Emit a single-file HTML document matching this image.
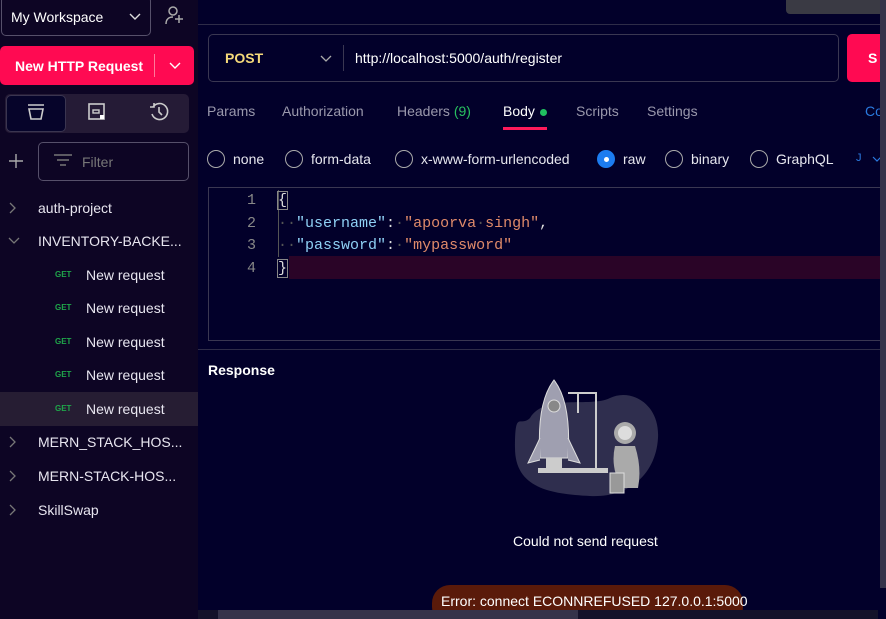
<!DOCTYPE html>
<html><head><meta charset="utf-8"><style>
*{margin:0;padding:0;box-sizing:border-box}
html,body{width:886px;height:619px;overflow:hidden}
body{background:#02002a;font-family:"Liberation Sans",sans-serif;color:#e6e6ee;position:relative;font-size:14px}
.a{position:absolute}
#sb{left:0;top:0;width:198px;height:619px;background:#0d0524}
.tree{left:0;width:198px;height:34px;font-size:14px;line-height:34px;color:#e8e6f0}
.tree svg{position:absolute;left:9px;top:11px}
.tree .t{position:absolute;left:38px}
.req .g{position:absolute;left:55px;color:#1fa64a;font-size:8px;font-weight:bold}
.req .t{left:86px}
.mono{font-family:"Liberation Mono","DejaVu Sans Mono",monospace;font-size:15px}
.tab{top:103px;font-size:14px;color:#9a98ac}
.rad{top:150px;font-size:14px;color:#e6e6ee;height:18px;line-height:18px}
.rad i{position:absolute;left:0;top:0;width:18px;height:18px;border:1.5px solid #aaa;border-radius:50%}
.rad span{position:absolute;left:26px;white-space:nowrap}
</style></head><body>
<div id="sb" class="a">
 <div class="a" style="left:1px;top:-4px;width:150px;height:40px;border:1px solid #56506a;border-radius:5px"></div>
 <div class="a" style="left:11px;top:9px;font-size:14px;color:#fff">My Workspace</div>
 <svg class="a" style="left:129px;top:13px" width="12" height="8"><path d="M1 1l5 5 5-5" fill="none" stroke="#ddd" stroke-width="1.4"/></svg>
 <svg class="a" style="left:164px;top:5px" width="22" height="20"><circle cx="9" cy="6" r="4" fill="none" stroke="#aaa" stroke-width="1.5"/><path d="M2 19c0-5 3-7 7-7M15 10v8M11 14h8" fill="none" stroke="#aaa" stroke-width="1.5"/></svg>
 <div class="a" style="left:0;top:46px;width:194px;height:39px;background:#ff0a52;border-radius:5px"></div>
 <div class="a" style="left:15px;top:58px;font-size:14px;font-weight:bold;color:#fff">New HTTP Request</div>
 <div class="a" style="left:154px;top:54px;width:1px;height:23px;background:#ff7a9a"></div>
 <svg class="a" style="left:169px;top:62px" width="12" height="8"><path d="M1 1l5 5 5-5" fill="none" stroke="#fff" stroke-width="1.4"/></svg>
 <div class="a" style="left:5px;top:94px;width:184px;height:39px;background:#251b36;border-radius:5px"></div>
 <div class="a" style="left:6px;top:95px;width:60px;height:37px;background:#06042a;border:1px solid #3a3550;border-radius:5px"></div>
 <svg class="a" style="left:26px;top:102px" width="20" height="20"><path d="M2 3h16M3 7h14l-2 10H5z" fill="none" stroke="#ccc" stroke-width="1.6"/></svg>
 <svg class="a" style="left:87px;top:102px" width="20" height="20"><rect x="2" y="2" width="15" height="15" fill="none" stroke="#ccc" stroke-width="1.6"/><rect x="6" y="8" width="6" height="3" fill="none" stroke="#ccc" stroke-width="1.4"/><rect x="13" y="13" width="4" height="4" fill="#fff"/></svg>
 <svg class="a" style="left:148px;top:101px" width="22" height="22"><path d="M5 6a8 8 0 1 1-1 7M2 6h4V2M11 6v5l3 3" fill="none" stroke="#ccc" stroke-width="1.6"/></svg>
 <svg class="a" style="left:8px;top:153px" width="16" height="16"><path d="M8 1v14M1 8h14" stroke="#aaa" stroke-width="1.4"/></svg>
 <div class="a" style="left:38px;top:142px;width:151px;height:39px;border:1px solid #56506a;border-radius:5px"></div>
 <svg class="a" style="left:53px;top:153px" width="20" height="16"><path d="M1 2h18M4 7h12M7 12h6" stroke="#777" stroke-width="1.5"/></svg>
 <div class="a" style="left:82px;top:154px;color:#777;font-size:14px">Filter</div>
 <div class="a tree" style="top:191px"><svg width="8" height="12"><path d="M1 1l5 5-5 5" fill="none" stroke="#777" stroke-width="1.3"/></svg><span class="t">auth-project</span></div>
 <div class="a tree" style="top:224px"><svg width="12" height="12" style="top:13px;left:8px"><path d="M1 1l5 5 5-5" fill="none" stroke="#777" stroke-width="1.3"/></svg><span class="t">INVENTORY-BACKE...</span></div>
 <div class="a tree req" style="top:258px"><span class="g">GET</span><span class="t">New request</span></div>
 <div class="a tree req" style="top:291px"><span class="g">GET</span><span class="t">New request</span></div>
 <div class="a tree req" style="top:325px"><span class="g">GET</span><span class="t">New request</span></div>
 <div class="a tree req" style="top:358px"><span class="g">GET</span><span class="t">New request</span></div>
 <div class="a tree req" style="top:392px;background:#261d33"><span class="g">GET</span><span class="t">New request</span></div>
 <div class="a tree" style="top:425px"><svg width="8" height="12"><path d="M1 1l5 5-5 5" fill="none" stroke="#777" stroke-width="1.3"/></svg><span class="t">MERN_STACK_HOS...</span></div>
 <div class="a tree" style="top:459px"><svg width="8" height="12"><path d="M1 1l5 5-5 5" fill="none" stroke="#777" stroke-width="1.3"/></svg><span class="t">MERN-STACK-HOS...</span></div>
 <div class="a tree" style="top:493px"><svg width="8" height="12"><path d="M1 1l5 5-5 5" fill="none" stroke="#777" stroke-width="1.3"/></svg><span class="t">SkillSwap</span></div>
</div>
<div class="a" style="left:198px;top:24px;width:688px;height:1px;background:#2e2c48"></div>
<div class="a" style="left:786px;top:-5px;width:100px;height:19px;background:#3a3a44;border-radius:4px"></div>
<div class="a" style="left:208px;top:34px;width:631px;height:48px;border:1px solid #3a3752;border-radius:5px"></div>
<div class="a" style="left:225px;top:50px;font-weight:bold;color:#f5d97a;font-size:14px">POST</div>
<svg class="a" style="left:320px;top:55px" width="12" height="8"><path d="M1 1l5 5 5-5" fill="none" stroke="#aaa" stroke-width="1.3"/></svg>
<div class="a" style="left:343px;top:45px;width:1px;height:26px;background:#3a3752"></div>
<div class="a" style="left:355px;top:50px;font-size:14px;color:#fff">http://localhost:5000/auth/register</div>
<div class="a" style="left:847px;top:34px;width:50px;height:48px;background:#ff0a52;border-radius:5px"></div>
<div class="a" style="left:868px;top:50px;font-weight:bold;color:#fff">S</div>
<div class="a tab" style="left:207px">Params</div>
<div class="a tab" style="left:282px">Authorization</div>
<div class="a tab" style="left:397px">Headers <span style="color:#28c060">(9)</span></div>
<div class="a tab" style="left:503px;color:#fff">Body</div>
<div class="a" style="left:540px;top:109px;width:7px;height:7px;border-radius:50%;background:#20c060"></div>
<div class="a" style="left:503px;top:127px;width:44px;height:3px;background:#ff1a5a"></div>
<div class="a tab" style="left:576px">Scripts</div>
<div class="a tab" style="left:647px">Settings</div>
<div class="a tab" style="left:865px;color:#2a7ae0">Co</div>
<div class="a rad" style="left:207px"><i></i><span>none</span></div>
<div class="a rad" style="left:285px"><i></i><span>form-data</span></div>
<div class="a rad" style="left:395px"><i></i><span>x-www-form-urlencoded</span></div>
<div class="a rad" style="left:597px"><i style="background:#1c7cf0;border-color:#1c7cf0"></i><span>raw</span></div>
<div class="a" style="left:604px;top:157px;width:5px;height:5px;border-radius:50%;background:#fff"></div>
<div class="a rad" style="left:665px"><i></i><span>binary</span></div>
<div class="a rad" style="left:750px"><i></i><span>GraphQL</span></div>
<div class="a" style="left:856px;top:152px;color:#2a7ae0;font-size:11px">J</div>
<svg class="a" style="left:872px;top:156px" width="10" height="7"><path d="M1 1l4 4 4-4" fill="none" stroke="#2a7ae0" stroke-width="1.2"/></svg>
<div class="a" style="left:208px;top:187px;width:690px;height:154px;border:1px solid #3a3752"></div>
<div class="a" style="left:289px;top:256px;width:600px;height:23px;background:#2a0427"></div>
<div class="a" style="left:278px;top:190px;width:1px;height:67px;background:#555"></div>
<div class="a mono" style="left:244px;top:190px;line-height:22.5px;color:#888;text-align:right;width:12px">1<br>2<br>3<br>4</div>
<div class="a mono" style="left:278px;top:190px;line-height:22.5px;white-space:pre;color:#ddd"><span style="outline:1px solid #888">{</span>
<span style="color:#555">··</span><span style="color:#8fd0f5">"username"</span>:<span style="color:#555">·</span><span style="color:#e08a6a">"apoorva<span style="color:#555">·</span>singh"</span>,
<span style="color:#555">··</span><span style="color:#8fd0f5">"password"</span>:<span style="color:#555">·</span><span style="color:#e08a6a">"mypassword"</span>
<span style="outline:1px solid #888">}</span></div>
<div class="a" style="left:198px;top:349px;width:688px;height:1px;background:#2e2c48"></div>
<div class="a" style="left:208px;top:362px;font-weight:bold;font-size:14px;color:#fff">Response</div>
<svg class="a" style="left:510px;top:378px" width="152" height="130">
<path d="M20 40C35 15 80 30 100 20S150 25 148 60 120 120 80 118 5 110 5 70 10 50 20 40z" fill="#2f2e4e"/>
<path d="M44 2C30 20 28 50 30 80H58C60 50 58 20 44 2z" fill="#9f9fb0" stroke="#ddd"/>
<circle cx="44" cy="28" r="6" fill="#888" stroke="#ddd"/>
<path d="M30 60L18 85 30 82M58 60L70 85 58 82" fill="#9f9fb0" stroke="#ddd"/>
<rect x="36" y="80" width="16" height="10" fill="#ccc"/>
<path d="M58 15H86V90M68 15V35" fill="none" stroke="#ccc" stroke-width="2"/>
<rect x="28" y="90" width="70" height="5" fill="#ccc"/>
<circle cx="115" cy="55" r="11" fill="#aaa"/><circle cx="115" cy="55" r="7" fill="#ddd"/>
<path d="M105 68Q100 90 112 110H128Q132 90 125 68z" fill="#aaa"/>
<rect x="100" y="95" width="14" height="20" fill="#999" stroke="#ddd"/>
</svg>
<div class="a" style="left:513px;top:533px;font-size:14px;color:#fff">Could not send request</div>
<div class="a" style="left:432px;top:585px;width:311px;height:40px;border-radius:18px;background:#5a1a0a"></div>
<div class="a" style="left:441px;top:593px;font-size:14px;color:#fff">Error: connect ECONNREFUSED 127.0.0.1:5000</div>
<div class="a" style="left:198px;top:610px;width:680px;height:9px;background:#14122a"></div>
<div class="a" style="left:218px;top:610px;width:360px;height:9px;background:#35334a"></div>
<div class="a" style="left:880px;top:0;width:6px;height:588px;background:#35334a"></div>
</body></html>
